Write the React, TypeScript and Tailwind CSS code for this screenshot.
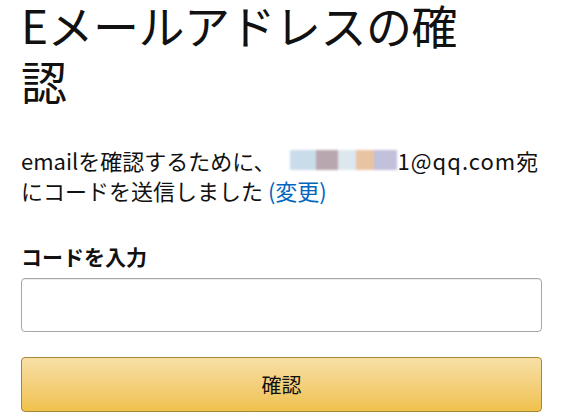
export default function App() {
  return (
    <div
      className="w-[567px] h-[416px] bg-white px-[21px] text-[#111]"
      style={{ fontFamily: '"Noto Sans CJK JP", "Noto Sans", sans-serif' }}
    >
      <h1 className="-mt-[4px] text-[46px] leading-[56px] font-normal max-w-[470px] tracking-[-0.5px]">
        Eメールアドレスの確認
      </h1>

      <p className="mt-[37px] text-[22px] leading-[30px]">
        <span className="flex items-center whitespace-nowrap">
          emailを確認するために、
          <span className="inline-flex h-[20px] ml-[14px] mr-[1px] blur-[1px]">
            <span className="w-[26px] bg-[#c9dcea]" />
            <span className="w-[22px] bg-[#b9a7b0]" />
            <span className="w-[18px] bg-[#dde8ee]" />
            <span className="w-[18px] bg-[#e9c4a3]" />
            <span className="w-[23px] bg-[#c1c1dc]" />
          </span>
          <span className="tracking-[1px]">1@qq.com</span>宛
        </span>
        <span className="block">
          にコードを送信しました <a className="text-[#0066c0]">(変更)</a>
        </span>
      </p>

      <label className="block mt-[37px] text-[21px] leading-[28px] font-bold">コードを入力</label>
      <input
        type="text"
        className="block mt-[8px] w-[521px] h-[54px] border border-[#a6a6a6] rounded-[4px] shadow-[inset_0_1px_0_rgba(0,0,0,0.07)] outline-none px-3"
      />

      <button
        type="button"
        className="mt-[25px] w-[521px] h-[55px] rounded-[4px] border border-[#a88734] bg-gradient-to-b from-[#f7dfa5] to-[#f0c14b] text-[20px] text-[#111]"
      >
        確認
      </button>
    </div>
  )
}
